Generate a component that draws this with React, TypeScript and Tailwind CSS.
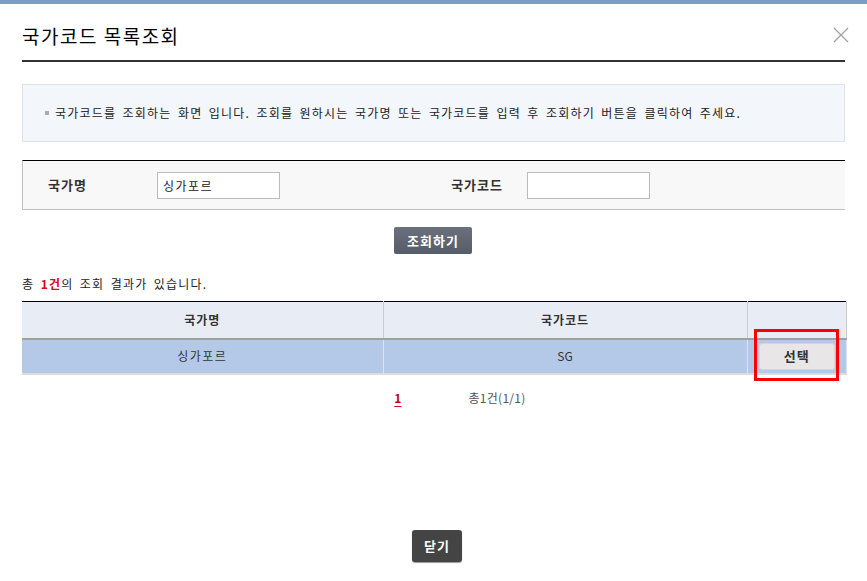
import React from "react";

const font = { fontFamily: '"Noto Sans CJK KR", "Noto Sans", sans-serif' };

export default function App() {
  return (
    <div className="w-[867px] h-[581px] bg-white relative overflow-hidden text-[#333]" style={font}>
      <div className="h-[4px] bg-[#7a9cc6]" />
      <div className="px-[22px]">
        {/* header */}
        <div className="h-[58px] flex items-center justify-between border-b-2 border-[#333] relative">
          <h1 className="text-[19px] text-black leading-none tracking-[1.5px] pt-[6px]">국가코드 목록조회</h1>
          <button className="absolute right-[-5px] top-[22px] w-[18px] h-[18px] flex items-center justify-center">
            <svg width="16" height="16" viewBox="0 0 16 16">
              <path d="M1 1 L15 15 M15 1 L1 15" stroke="#9aa0a8" strokeWidth="1.2" />
            </svg>
          </button>
        </div>

        {/* info */}
        <div className="mt-[22px] h-[58px] bg-[#f3f6fb] border border-[#dde3ec] flex items-center pl-[22px] text-[12px] text-[#222] tracking-[1.2px] [word-spacing:2.5px]">
          <span className="w-[4px] h-[4px] bg-[#aaa] mr-[6px] shrink-0" />
          국가코드를 조회하는 화면 입니다. 조회를 원하시는 국가명 또는 국가코드를 입력 후 조회하기 버튼을 클릭하여 주세요.
        </div>

        {/* search */}
        <div className="mt-[18px] h-[50px] bg-[#f8f8f8] border-t border-t-black border-b border-b-[#c0c0c0] border-l border-l-[#c0c0c0] flex items-center text-[13px]">
          <span className="w-[134px] pl-[25px] font-bold text-[#333] tracking-[1px]">국가명</span>
          <input
            defaultValue="싱가포르"
            className="w-[123px] h-[27px] border border-[#bbb] bg-white px-[5px] text-[12px] text-[#222] outline-none tracking-[1.5px]"
            style={font}
          />
          <span className="w-[247px] text-right pr-[24px] font-bold text-[#333] tracking-[1px]">국가코드</span>
          <input
            className="w-[123px] h-[27px] border border-[#bbb] bg-white px-[5px] text-[12px] outline-none"
            style={font}
          />
        </div>

        <div className="mt-[17px] flex justify-center">
          <button className="w-[78px] h-[27px] rounded-[2px] bg-gradient-to-b from-[#6a717c] to-[#565d68] text-white text-[13px] font-bold tracking-[1px] ml-[-1px]">
            조회하기
          </button>
        </div>

        <p className="mt-[21px] text-[12px] text-[#222] tracking-[1.2px] [word-spacing:2.5px]">
          총 <span className="text-[#e0001b] font-bold">1건</span>의 조회 결과가 있습니다.
        </p>

        {/* results */}
        <table className="mt-[8px] w-[825px] border-collapse text-[12px]">
          <thead>
            <tr className="h-[37px] bg-[#e8edf5] border-t border-t-black border-b-2 border-b-[#a0a0a0]">
              <th className="w-[361px] font-bold text-[#333] border-r border-[#c8ccd2] tracking-[1px]">국가명</th>
              <th className="w-[364px] font-bold text-[#333] border-r border-[#c8ccd2] tracking-[1px]">국가코드</th>
              <th className="border-r border-[#c8ccd2]" />
            </tr>
          </thead>
          <tbody>
            <tr className="h-[35px] bg-[#b4c9e8] border-b-2 border-b-[#dcdcdc]">
              <td className="text-center text-[#333] border-r border-[#dde3ec] tracking-[1.5px]">싱가포르</td>
              <td className="text-center text-[#333] border-r border-[#dde3ec]">SG</td>
              <td className="text-center border-r border-[#dde3ec] relative">
                <button className="w-[76px] h-[27px] rounded-[3px] bg-[#e8e6e6] border border-[#d6d6d6] text-[13px] font-bold text-[#333] tracking-[1px]">
                  선택
                </button>
                <span className="absolute left-[6px] top-[-11px] w-[85px] h-[52px] border-[3px] border-[#ff0000] pointer-events-none" />
              </td>
            </tr>
          </tbody>
        </table>

        {/* paging */}
        <div className="mt-[14px] flex justify-center items-center text-[12px] ml-[53px]">
          <span className="text-[#c4001b] font-bold underline underline-offset-[3px]">1</span>
          <span className="ml-[67px] text-[#555] tracking-[0.3px]">총1건(1/1)</span>
        </div>
      </div>

      <div className="absolute left-0 right-0 top-[530px] flex justify-center">
        <button className="w-[50px] h-[32px] rounded-[3px] bg-[#444] text-white text-[13px] font-bold shadow-[0_1px_1px_rgba(0,0,0,0.4)] tracking-[1px] ml-[7px]">
          닫기
        </button>
      </div>
    </div>
  );
}
